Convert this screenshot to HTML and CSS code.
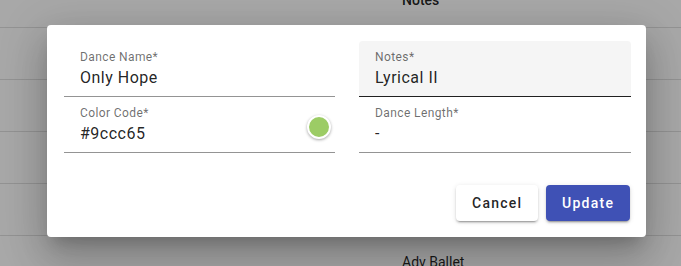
FILE: index.html
```html
<!DOCTYPE html>
<html>
<head>
<meta charset="utf-8">
<link rel="stylesheet" href="styles.css">
</head>
<body>
<div class="table">
  <div class="row head"><div class="cell">Notes</div></div>
  <div class="row"><div class="cell"></div></div>
  <div class="row"><div class="cell"></div></div>
  <div class="row"><div class="cell"></div></div>
  <div class="row"><div class="cell"></div></div>
  <div class="row"><div class="cell">Adv Ballet</div></div>
</div>
<div class="backdrop"></div>
<div class="dialog">
  <div class="fields">
    <div class="field">
      <div class="label">Dance Name*</div>
      <div class="value">Only Hope</div>
    </div>
    <div class="field filled">
      <div class="label">Notes*</div>
      <div class="value">Lyrical II</div>
    </div>
    <div class="field">
      <div class="label">Color Code*</div>
      <div class="value">#9ccc65</div>
      <span class="swatch"></span>
    </div>
    <div class="field">
      <div class="label">Dance Length*</div>
      <div class="value">-</div>
    </div>
  </div>
  <div class="actions">
    <button class="btn cancel">Cancel</button>
    <button class="btn update">Update</button>
  </div>
</div>
</body>
</html>
```
FILE: styles.css
```css
html, body {
  margin: 0;
  padding: 0;
  width: 681px;
  height: 266px;
  overflow: hidden;
  background: #fff;
  font-family: Roboto, "Liberation Sans", sans-serif;
}
.table {
  margin-top: -28px;
}
.row {
  height: 51px;
  border-bottom: 1px solid #e0e0e0;
  display: flex;
  align-items: center;
}
.row.head {
  height: 55px;
}
.cell {
  padding-left: 402px;
  font-size: 14px;
  color: rgba(0,0,0,0.87);
}
.row.head .cell {
  font-weight: 500;
}
.backdrop {
  position: absolute;
  inset: 0;
  background: rgba(0,0,0,0.34);
}
.dialog {
  position: absolute;
  left: 47px;
  top: 25px;
  width: 599px;
  height: 212px;
  box-sizing: border-box;
  background: #fff;
  border-radius: 4px;
  padding: 16px 15px 16px 17px;
  box-shadow: 0 11px 15px -7px rgba(0,0,0,.2), 0 24px 38px 3px rgba(0,0,0,.14), 0 9px 46px 8px rgba(0,0,0,.12);
}
.fields {
  display: grid;
  grid-template-columns: 271px 272px;
  column-gap: 24px;
}
.field {
  position: relative;
  border-bottom: 1px solid rgba(0,0,0,0.42);
  padding: 9px 16px 0;
  height: 46px;
}
.field.filled {
  background: #f5f5f5;
  border-radius: 4px 4px 0 0;
  border-bottom-color: rgba(0,0,0,0.87);
}
.label {
  font-size: 12px;
  line-height: 14px;
  color: rgba(0,0,0,0.58);
  letter-spacing: 0.4px;
}
.value {
  margin-top: 3px;
  font-size: 16px;
  line-height: 22px;
  color: rgba(0,0,0,0.87);
  letter-spacing: 0.5px;
}
.swatch {
  position: absolute;
  right: 4px;
  top: 18px;
  width: 20px;
  height: 20px;
  border-radius: 50%;
  background: #9ccc65;
  border: 2px solid #fff;
  box-shadow: 0 1px 3px rgba(0,0,0,0.35);
}
.actions {
  display: flex;
  justify-content: flex-end;
  gap: 8px;
  margin-top: 32px;
  padding-right: 1px;
}
.btn {
  height: 36px;
  border: none;
  border-radius: 4px;
  font-family: Roboto, "Liberation Sans", sans-serif;
  font-size: 14px;
  font-weight: 500;
  letter-spacing: 1.25px;
  padding: 0 16px;
  box-shadow: 0 3px 1px -2px rgba(0,0,0,.2), 0 2px 2px 0 rgba(0,0,0,.14), 0 1px 5px 0 rgba(0,0,0,.12);
}
.cancel {
  background: #fff;
  color: rgba(0,0,0,0.87);
  width: 82px;
}
.update {
  background: #3f51b5;
  color: #fff;
  width: 84px;
}
```
